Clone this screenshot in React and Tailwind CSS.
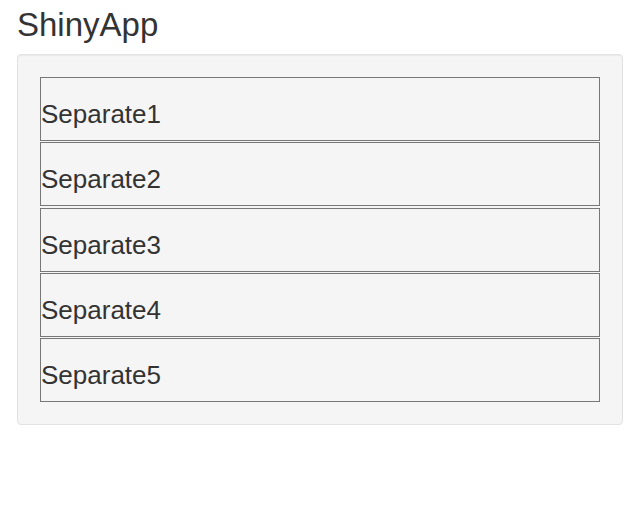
import React from 'react';

const ITEMS = ['Separate1', 'Separate2', 'Separate3', 'Separate4', 'Separate5'];

export default function App() {
  return (
    <div className="min-h-[526px] bg-white text-[#333333] font-['Liberation_Sans',Arial,sans-serif]">
      <div className="pl-[17px] pr-[8px] pt-[7px]">
        {/* Title */}
        <h2 className="text-[33px] leading-[36px] font-normal mb-[11px]">ShinyApp</h2>

        {/* Well panel */}
        <div className="w-[606px] bg-[#f5f5f5] border border-[#e3e3e3] rounded-[4px] shadow-[inset_0_1px_1px_rgba(0,0,0,0.05)] p-[22px]">
          <div className="flex flex-col gap-[1.25px]">
            {ITEMS.map((item) => (
              <div
                key={item}
                className="h-[64px] border border-[#777777] pt-[21px] text-[26px] leading-[30px]"
              >
                {item}
              </div>
            ))}
          </div>
        </div>
      </div>
    </div>
  );
}
